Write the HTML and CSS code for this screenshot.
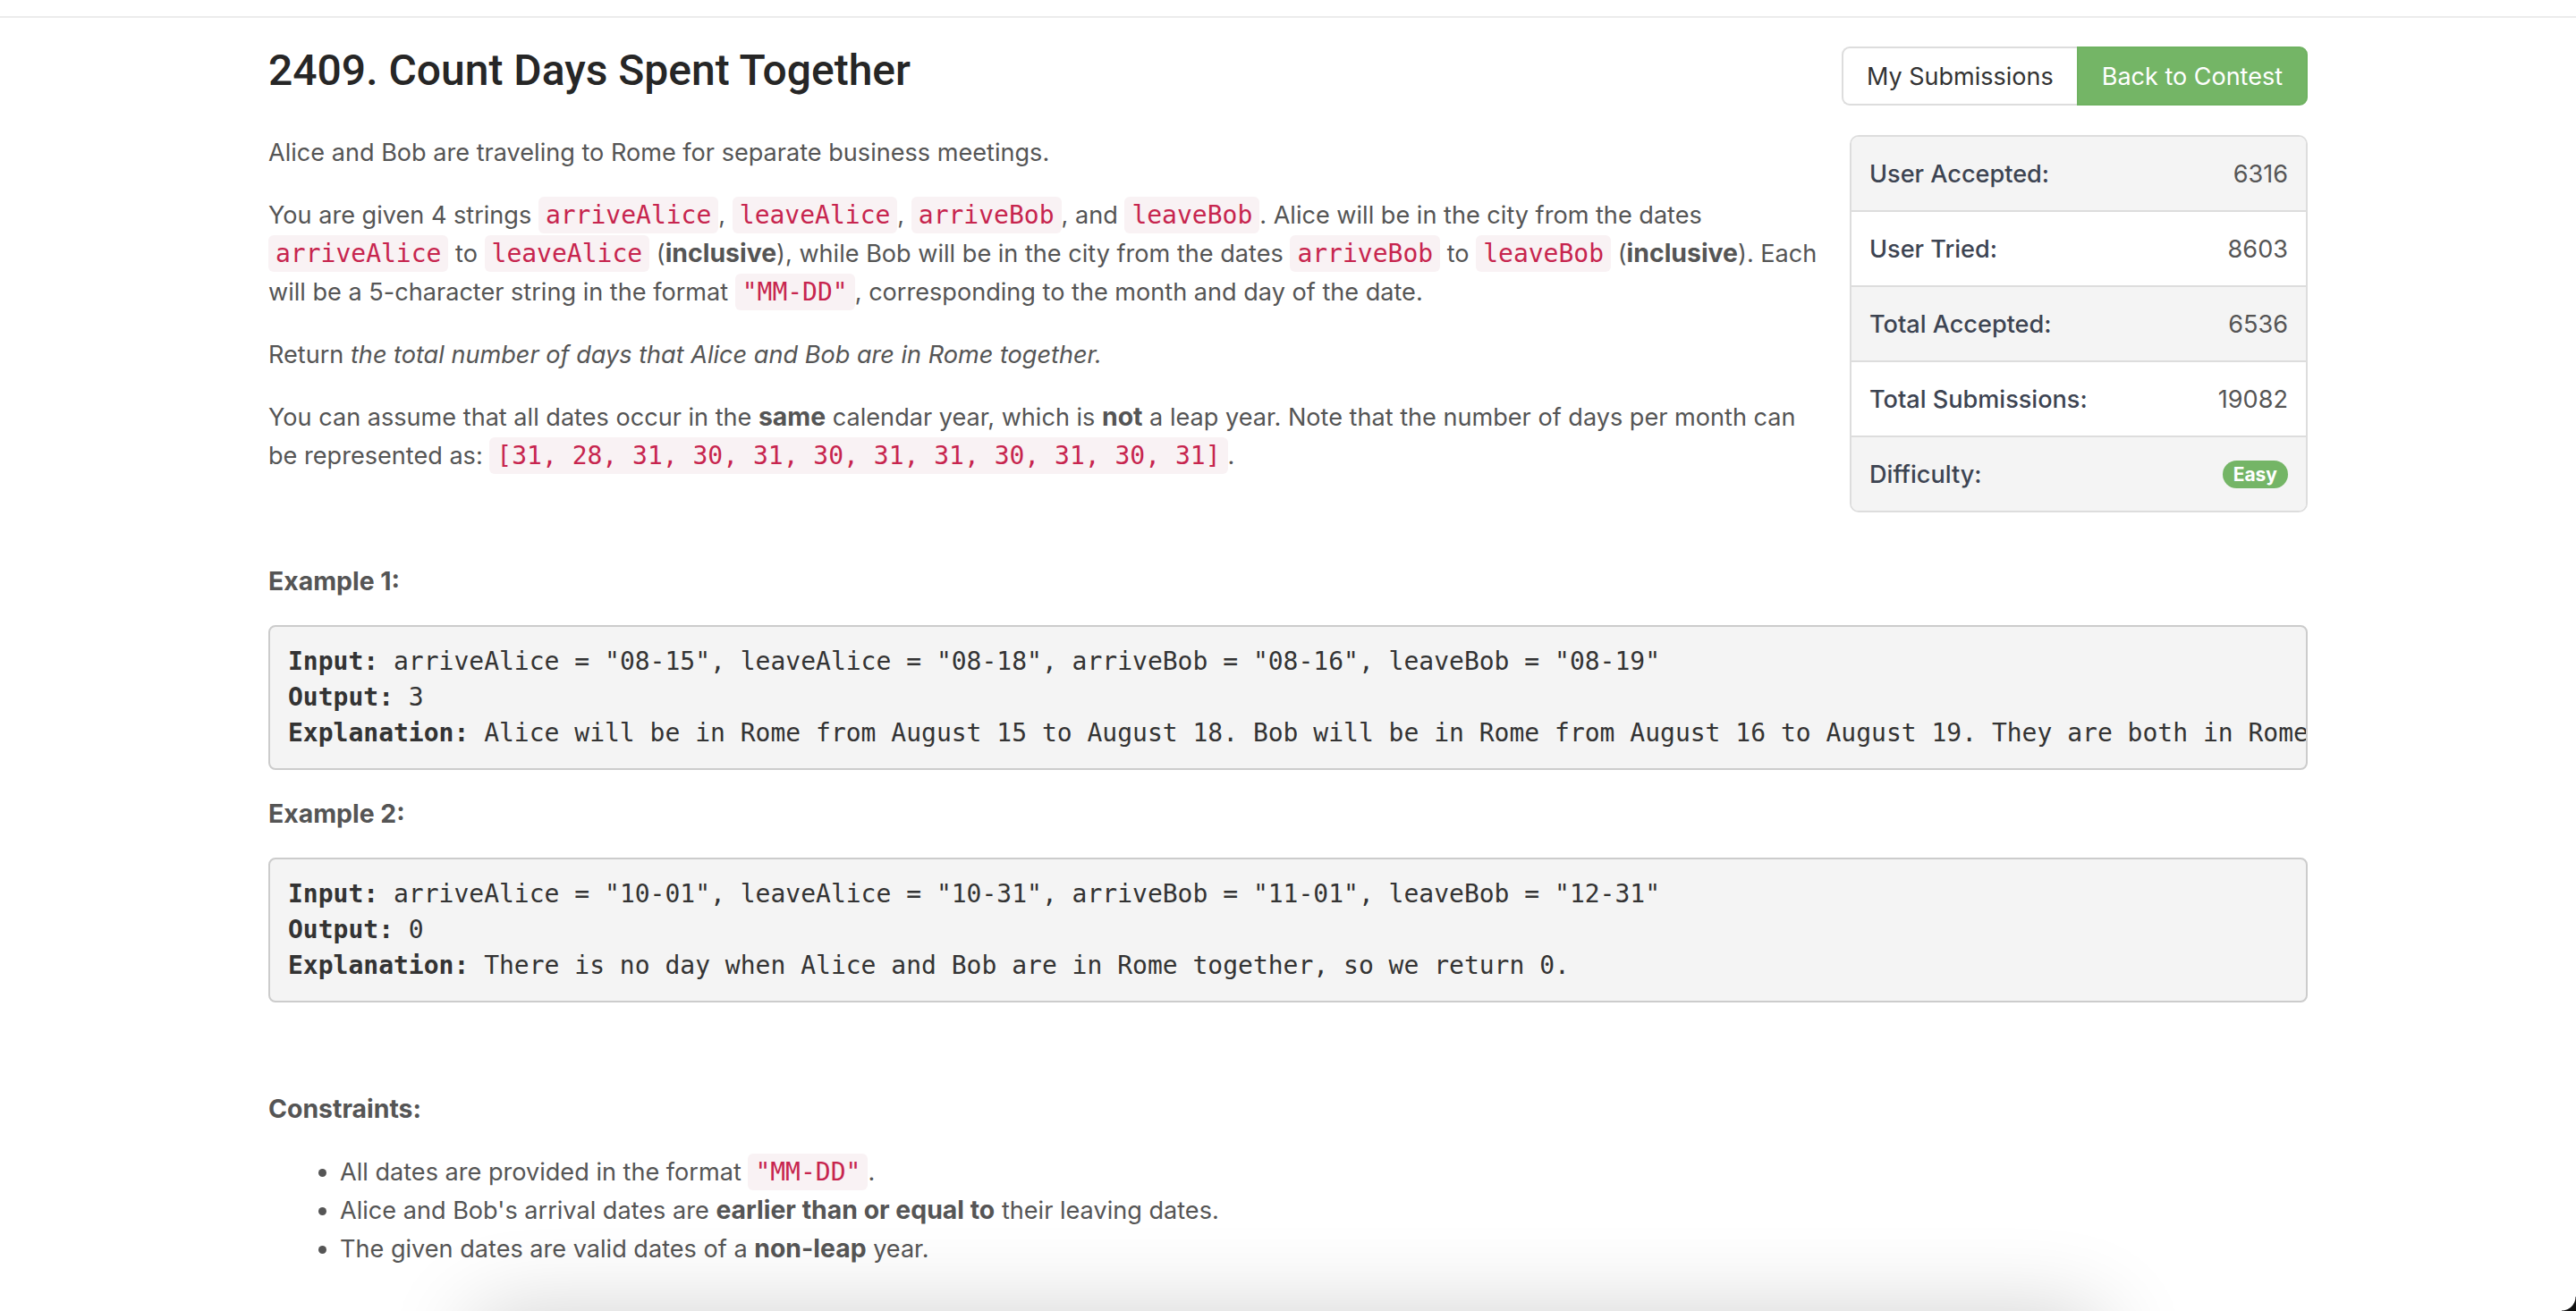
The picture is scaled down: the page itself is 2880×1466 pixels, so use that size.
FILE: index.html
```html
<!DOCTYPE html>
<html lang="en">
<head>
<meta charset="utf-8">
<title>2409. Count Days Spent Together</title>
<link rel="stylesheet" href="styles.css">
</head>
<body>
<div class="topline"></div>
<main class="container">
  <div class="head">
    <div class="main-col">
      <h3 class="title">2409. Count Days Spent Together</h3>
      <div class="desc">
        <p>Alice and Bob are traveling to Rome for separate business meetings.</p>
        <p>You are given 4 strings <code>arriveAlice</code>, <code>leaveAlice</code>, <code>arriveBob</code>, and <code>leaveBob</code>. Alice will be in the city from the dates <code>arriveAlice</code> to <code>leaveAlice</code> (<strong>inclusive</strong>), while Bob will be in the city from the dates <code>arriveBob</code> to <code>leaveBob</code> (<strong>inclusive</strong>). Each will be a 5-character string in the format <code>"MM-DD"</code>, corresponding to the month and day of the date.</p>
        <p>Return <em>the total number of days that Alice and Bob are in Rome together.</em></p>
        <p>You can assume that all dates occur in the <strong>same</strong> calendar year, which is <strong>not</strong> a leap year. Note that the number of days per month can be represented as: <code>[31, 28, 31, 30, 31, 30, 31, 31, 30, 31, 30, 31]</code>.</p>
      </div>
    </div>
    <aside class="side">
      <div class="btn-group">
        <a class="btn btn-default">My Submissions</a>
        <a class="btn btn-success">Back to Contest</a>
      </div>
      <ul class="stats">
        <li><span class="stat-label">User Accepted:</span><span class="stat-value">6316</span></li>
        <li><span class="stat-label">User Tried:</span><span class="stat-value">8603</span></li>
        <li><span class="stat-label">Total Accepted:</span><span class="stat-value">6536</span></li>
        <li><span class="stat-label">Total Submissions:</span><span class="stat-value">19082</span></li>
        <li><span class="stat-label">Difficulty:</span><span class="badge">Easy</span></li>
      </ul>
    </aside>
  </div>

  <div class="rest">
    <p><strong>Example 1:</strong></p>
<pre><strong>Input:</strong> arriveAlice = "08-15", leaveAlice = "08-18", arriveBob = "08-16", leaveBob = "08-19"
<strong>Output:</strong> 3
<strong>Explanation:</strong> Alice will be in Rome from August 15 to August 18. Bob will be in Rome from August 16 to August 19. They are both in Rome together on August 16th, 17th, and 18th, so the answer is 3.
</pre>
    <p><strong>Example 2:</strong></p>
<pre><strong>Input:</strong> arriveAlice = "10-01", leaveAlice = "10-31", arriveBob = "11-01", leaveBob = "12-31"
<strong>Output:</strong> 0
<strong>Explanation:</strong> There is no day when Alice and Bob are in Rome together, so we return 0.
</pre>
    <p>&nbsp;</p>
    <p><strong>Constraints:</strong></p>
    <ul class="constraints">
      <li>All dates are provided in the format <code>"MM-DD"</code>.</li>
      <li>Alice and Bob's arrival dates are <strong>earlier than or equal to</strong> their leaving dates.</li>
      <li>The given dates are valid dates of a <strong>non-leap</strong> year.</li>
    </ul>
  </div>
</main>
<div class="dock-shadow"></div>
<div class="corner"></div>
</body>
</html>
```

FILE: styles.css
```css
* { box-sizing: border-box; }
html, body { margin: 0; padding: 0; background: #fff; }
body {
  font-family: Inter, "Liberation Sans", sans-serif;
  font-size: 27.1px;
  line-height: 43px;
  color: #555;
}
.topline { margin-top: 18px; height: 2px; background: #ececec; }
.container { width: 2280px; margin: 0 auto; padding-top: 32px; }
.head { display: flex; gap: 23px; align-items: flex-start; }
.main-col { flex: 1; min-width: 0; }
.title {
  margin: 0 0 44px;
  font-family: Roboto, "Liberation Sans", sans-serif;
  font-size: 48px;
  line-height: 53px;
  font-weight: 500;
  color: #262626;
}
.desc p, .rest p { margin: 0 0 27px; }
.desc strong, .rest p strong, .constraints strong {
  font-weight: 700;
  font-size: 28.4px;
  line-height: 1;
}
code {
  font-family: "DejaVu Sans Mono", monospace;
  font-size: 28px;
  line-height: 1;
  color: #c7254e;
  background: #f9f2f4;
  padding: 4px 8px;
  border-radius: 6px;
}
.side { width: 517px; flex: none; }
.btn-group { display: flex; justify-content: flex-end; }
.btn {
  flex: none;
  height: 66px;
  padding: 0 26px;
  display: flex;
  align-items: center;
  font-size: 27px;
  white-space: nowrap;
  border: 2px solid #ddd;
}
.btn-default { background: #fff; color: #333; border-radius: 9px 0 0 9px; border-right: 0; }
.btn-success { background: #74b566; color: #fff; border-color: #6fb261; border-radius: 0 9px 9px 0; }
.stats {
  margin: 33px 0 0 5px;
  padding: 0;
  list-style: none;
  border: 2px solid #ddd;
  border-radius: 10px;
  overflow: hidden;
}
.stats li {
  display: flex;
  justify-content: space-between;
  align-items: center;
  height: 84px;
  padding: 0 20px;
  border-top: 2px solid #ddd;
  background: #fff;
}
.stats li:first-child { border-top: 0; height: 82px; }
.stats li:nth-child(odd) { background: #f4f4f4; }
.stat-label { color: #3d4452; font-weight: 500; }
.stat-value { color: #555; }
.badge {
  background: #74b566;
  color: #fff;
  font-size: 21px;
  font-weight: 700;
  line-height: 31px;
  height: 31px;
  padding: 0 12px;
  border-radius: 16px;
}
.rest { margin-top: 56px; }
pre {
  margin: 0 0 28px;
  padding: 19px 20px;
  border: 2px solid #ccc;
  border-radius: 8px;
  background: #f4f4f4;
  font-family: "DejaVu Sans Mono", monospace;
  font-size: 28px;
  line-height: 40px;
  color: #333;
  overflow: hidden;
  white-space: pre;
}
.constraints { margin: 0 0 27px; padding-left: 80px; }
.dock-shadow {
  position: fixed;
  left: 530px;
  right: 530px;
  top: 1470px;
  height: 100px;
  border-radius: 20px;
  box-shadow: 0 0 100px rgba(0,0,0,0.2);
}
.corner {
  position: fixed;
  right: 0;
  bottom: 0;
  width: 16px;
  height: 16px;
  background: radial-gradient(circle at 0 0, transparent 15px, #111 16px);
}
```
